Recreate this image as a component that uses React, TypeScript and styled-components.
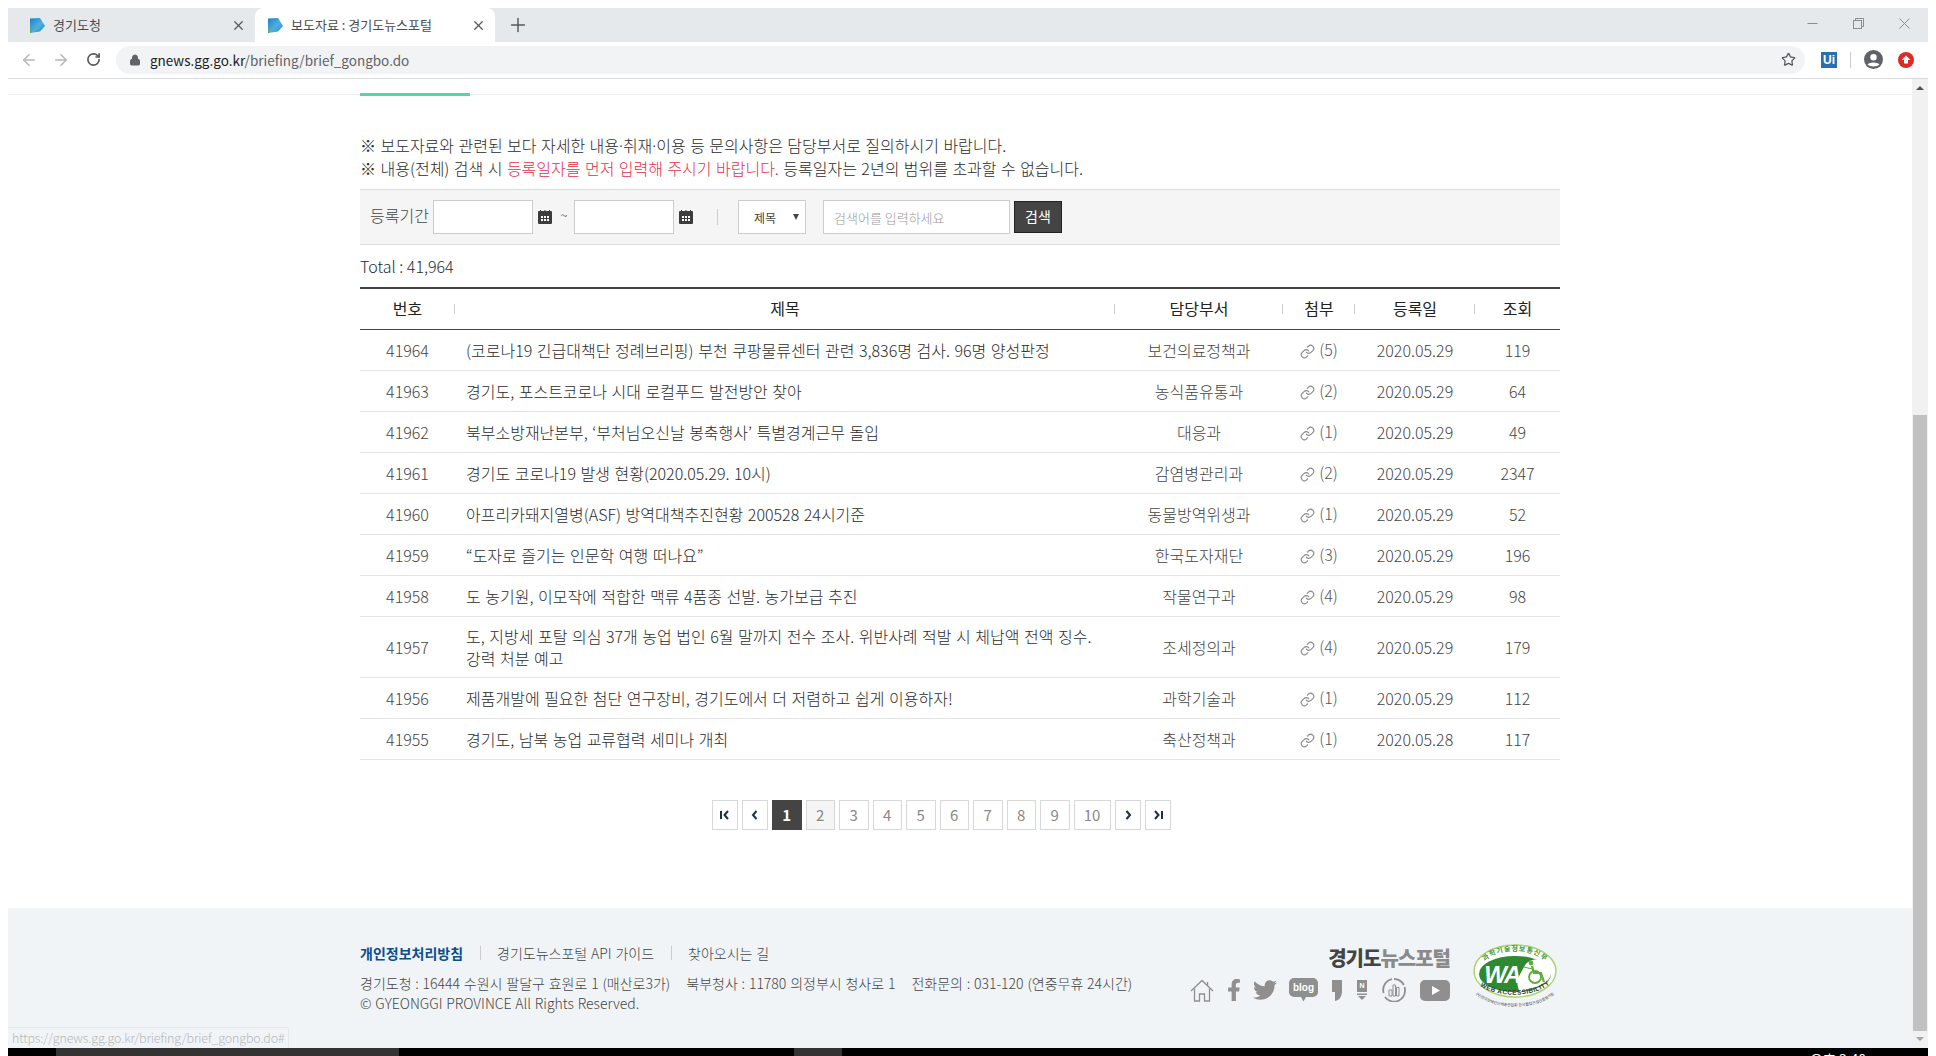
import React from "react";
import styled, { createGlobalStyle } from "styled-components";
import { Link as LinkIcon, Plus, X, ArrowLeft, ArrowRight, RotateCw, Lock, Star } from "lucide-react";
import { FaFacebookF, FaTwitter } from "react-icons/fa";

const FONT = `"Noto Sans CJK KR", "Noto Sans", sans-serif`;

const GlobalStyle = createGlobalStyle`
  html, body {
    margin: 0;
    padding: 0;
    height: 1056px;
    overflow: hidden;
    background: #fff;
    font-family: ${FONT};
  }
  * { box-sizing: border-box; }
`;

const Window = styled.div`
  width: 1920px;
  height: 1048px;
  margin: 8px 0 0 8px;
  display: flex;
  flex-direction: column;
`;

const TabStrip = styled.div`
  height: 34px;
  flex: none;
  background: #e6e9ec;
  display: flex;
  align-items: stretch;
  padding-right: 18px;
`;

const Tab = styled.div<{ $active?: boolean }>`
  width: ${(p) => (p.$active ? "240px" : "247px")};
  display: flex;
  align-items: center;
  padding: 0 9px 0 ${(p) => (p.$active ? "12px" : "21px")};
  gap: 8px;
  background: ${(p) => (p.$active ? "#fff" : "transparent")};
  border-radius: 8px 8px 0 0;
  font-size: 13px;
  color: #4a4d50;
`;

const TabTitle = styled.span`
  flex: 1;
  white-space: nowrap;
  padding-bottom: 2px;
`;

const NewTab = styled.div`
  margin-left: 12px;
  display: flex;
  align-items: center;
  color: #55585c;
`;

const WindowControls = styled.div`
  margin-left: auto;
  display: flex;
  align-items: center;
  gap: 35px;
  padding-bottom: 4px;
`;

const Toolbar = styled.div`
  height: 37px;
  flex: none;
  background: #fff;
  border-bottom: 1px solid #d9dadb;
  display: flex;
  align-items: center;
  padding: 0 14px 1px 12px;
`;

const NavIcons = styled.div`
  display: flex;
  align-items: center;
  gap: 14px;
  width: 96px;
`;

const ReloadIcon = styled(RotateCw)`
  margin-left: 2px;
`;

const AddressBar = styled.div`
  width: 1690px;
  height: 28px;
  background: #f1f3f4;
  border-radius: 14px;
  display: flex;
  align-items: center;
  padding: 0 9px 0 13px;
  gap: 9px;
  font-size: 13.5px;
  color: #202124;
`;

const UrlPath = styled.span`
  color: #5f6368;
`;

const UrlText = styled.span`
  flex: 1;
`;

const ExtensionIcons = styled.div`
  display: flex;
  align-items: center;
  margin-left: 16px;
`;

const UiBadge = styled.div`
  width: 16px;
  height: 16px;
  background: #2a70ad;
  color: #fff;
  font: bold 12px/16px "Liberation Sans", sans-serif;
  text-align: center;
`;

const ToolbarDivider = styled.div`
  width: 1px;
  height: 16px;
  background: #ccc;
  margin: 0 13px 0 13px;
`;

const Viewport = styled.div`
  flex: 1;
  display: flex;
  min-height: 0;
  position: relative;
`;

const Page = styled.div`
  flex: 1;
  display: flex;
  flex-direction: column;
  background: #fff;
  min-width: 0;
`;

const TabLine = styled.div`
  height: 16px;
  flex: none;
  border-bottom: 1px solid #eee;
`;

const TabIndicator = styled.div`
  width: 110px;
  height: 3px;
  margin: 14px 0 0 352px;
  background: #55d3ab;
`;

const Content = styled.main`
  width: 1200px;
  margin-left: 352px;
  color: #2b2b2b;
  font-weight: 300;
`;

const Notice = styled.div`
  margin-top: 40px;
  font-size: 16px;
  line-height: 21.5px;
  word-spacing: 0.9px;
`;

const Dot = styled.span`
  font-family: "Noto Sans", sans-serif;
`;

const Red = styled.span`
  color: #e2324b;
`;

const SearchBar = styled.form`
  margin-top: 10px;
  height: 56px;
  background: #f5f5f5;
  border-top: 1px solid #ddd;
  border-bottom: 1px solid #ddd;
  display: flex;
  align-items: center;
  padding: 0 0 0 10px;
`;

const SearchLabel = styled.label`
  font-size: 16px;
  color: #444;
  width: 63px;
  padding-bottom: 4px;
`;

const DateInput = styled.input`
  width: 100px;
  height: 34px;
  border: 1px solid #ccc;
  background: #fff;
  padding: 0 8px;
  outline: none;
`;

const CalendarWrap = styled.span`
  display: flex;
  margin-left: 5px;
`;

const Tilde = styled.span`
  width: 22px;
  text-align: center;
  font-size: 13px;
  color: #444;
  padding: 0 0 6px 2px;
`;

const Divider = styled.span`
  width: 1px;
  height: 16px;
  background: #ccc;
  margin: 0 20px 0 24px;
`;

const SelectBox = styled.div`
  position: relative;
  width: 68px;
  height: 34px;
`;

const Select = styled.select`
  width: 100%;
  height: 100%;
  appearance: none;
  border: 1px solid #ccc;
  background: #fff;
  font-family: ${FONT};
  font-size: 12px;
  color: #444;
  padding: 0 0 0 15px;
  outline: none;
  border-radius: 0;
`;

const SelectArrow = styled.span`
  position: absolute;
  right: 7px;
  top: 14px;
  width: 0;
  height: 0;
  border-left: 3px solid transparent;
  border-right: 3px solid transparent;
  border-top: 6px solid #444;
`;

const KeywordInput = styled.input`
  width: 187px;
  height: 34px;
  margin-left: 17px;
  border: 1px solid #ccc;
  background: #fff;
  font-family: ${FONT};
  font-size: 13px;
  font-weight: 300;
  padding: 0 10px;
  outline: none;
  &::placeholder { color: #999; }
`;

const SearchButton = styled.button`
  width: 48px;
  height: 32px;
  margin-left: 4px;
  background: #444;
  border: 1px solid #222;
  color: #fff;
  font-family: ${FONT};
  font-size: 14px;
  padding: 0 0 3px;
`;

const Total = styled.p`
  margin: 9px 0 9px;
  font-size: 16px;
  line-height: 24px;
`;

const Board = styled.table`
  width: 1200px;
  table-layout: fixed;
  border-collapse: collapse;
  border-top: 2px solid #444;
`;

const HeadCell = styled.th<{ $w: number; $divider?: boolean }>`
  width: ${(p) => p.$w}px;
  height: 41px;
  padding: 0 0 2px;
  font-size: 16px;
  font-weight: 400;
  color: #222;
  border-bottom: 1px solid #444;
  position: relative;
  &::after {
    content: "";
    display: ${(p) => (p.$divider ? "block" : "none")};
    position: absolute;
    right: 0;
    top: 15px;
    width: 1px;
    height: 10px;
    background: #ccc;
  }
`;

const Row = styled.tr`
  border-bottom: 1px solid #e4e4e4;
`;

const Cell = styled.td`
  height: 41px;
  padding: 0;
  text-align: center;
  font-size: 16px;
  color: #444;
`;

const TitleCell = styled.td`
  padding: 8px 18px 8px 11px;
  font-size: 16px;
  line-height: 22px;
  word-spacing: 1px;
  word-break: keep-all;
  color: #2b2b2b;
`;

const AttachInner = styled.span`
  display: inline-flex;
  align-items: center;
  gap: 4px;
  color: #555;
`;

const AttachIcon = styled(LinkIcon)`
  color: #888;
  transform: translateY(2px);
`;

const Pager = styled.nav`
  display: flex;
  gap: 4px;
  margin: 40px 0 0 352px;
`;

const PageButton = styled.a<{ $active?: boolean; $hover?: boolean; $w?: number }>`
  width: ${(p) => p.$w ?? 29.5}px;
  height: 30px;
  display: flex;
  align-items: center;
  justify-content: center;
  border: 1px solid ${(p) => (p.$active ? "#444" : "#d8d8d8")};
  background: ${(p) => (p.$active ? "#444" : p.$hover ? "#f5f5f5" : "#fff")};
  color: ${(p) => (p.$active ? "#fff" : "#888")};
  font-size: 15px;
  font-weight: ${(p) => (p.$active ? 700 : 400)};
`;

const Footer = styled.footer`
  margin-top: auto;
  height: 140px;
  flex: none;
  background: #f0f4f7;
  display: flex;
  padding-left: 352px;
`;

const FooterInner = styled.div`
  width: 1200px;
  display: flex;
  justify-content: space-between;
`;

const FooterLeft = styled.div`
  padding-top: 34px;
  font-size: 14px;
  font-weight: 300;
  color: #444;
  word-spacing: 0.7px;
`;

const FooterLinks = styled.ul`
  display: flex;
  list-style: none;
  margin: 0 0 9px;
  padding: 0;
  line-height: 22px;
`;

const FooterLink = styled.li<{ $strong?: boolean }>`
  color: ${(p) => (p.$strong ? "#0c4f8f" : "#444")};
  font-weight: ${(p) => (p.$strong ? 700 : 300)};
  & + & {
    margin-left: 17px;
    padding-left: 17px;
    background: linear-gradient(#ccc, #ccc) left center / 1px 14px no-repeat;
  }
`;

const Address = styled.address`
  font-style: normal;
  line-height: 20px;
`;

const AddressPart = styled.span`
  margin-right: 16px;
`;

const FooterRight = styled.div`
  display: flex;
  align-items: flex-start;
  gap: 20px;
  padding-top: 37px;
`;

const BrandBlock = styled.div`
  display: flex;
  flex-direction: column;
  align-items: flex-end;
`;

const Brand = styled.div`
  font-size: 20px;
  line-height: 26px;
  font-weight: 900;
  letter-spacing: -1px;
  color: #444;
`;

const BrandLight = styled.span`
  color: #8a8a8a;
`;

const SnsRow = styled.div`
  display: flex;
  align-items: center;
  margin-top: 7px;
  height: 24px;
  color: #8f8f8f;
`;

const Sns = styled.span<{ $gap: number }>`
  display: flex;
  margin-left: ${(p) => p.$gap}px;
`;

const BadgeWrap = styled.div`
  margin-top: -2px;
  display: flex;
`;

const Scrollbar = styled.div`
  width: 16px;
  flex: none;
  background: #f1f1f1;
  display: flex;
  flex-direction: column;
  align-items: center;
  padding-top: 7px;
`;

const ScrollUp = styled.span`
  width: 0;
  height: 0;
  border-left: 4px solid transparent;
  border-right: 4px solid transparent;
  border-bottom: 4px solid #505050;
`;

const ScrollThumb = styled.div`
  width: 14px;
  height: 616px;
  margin-top: 325px;
  background: #c1c1c1;
`;

const ScrollDown = styled.span`
  width: 0;
  height: 0;
  margin-top: 6px;
  border-left: 4px solid transparent;
  border-right: 4px solid transparent;
  border-top: 4px solid #a3a3a3;
`;

const StatusBubble = styled.div`
  position: absolute;
  left: 0;
  bottom: 0;
  height: 21px;
  padding: 0 4px;
  background: #f0f4f7;
  border: 1px solid #e6e8ea;
  border-left: none;
  border-bottom: none;
  border-radius: 0 3px 0 0;
  font-size: 12.5px;
  font-weight: 300;
  letter-spacing: -0.15px;
  line-height: 19px;
  color: #b8b8b8;
`;

const Taskbar = styled.div`
  height: 8px;
  flex: none;
  background: #000;
  overflow: hidden;
  display: flex;
  position: relative;
`;

const TaskItem = styled.div<{ $w: number; $gap: number }>`
  width: ${(p) => p.$w}px;
  margin-left: ${(p) => p.$gap}px;
  background: #333;
`;

const Clock = styled.div`
  margin-left: 968px;
  padding-top: 2px;
  color: #fff;
  font-size: 14px;
  line-height: 18px;
  white-space: nowrap;
`;

function Favicon() {
  return (
    <svg width="16" height="15" viewBox="0 0 16 15">
      <defs>
        <linearGradient id="favBlue" x1="0" y1="0" x2="1" y2="1">
          <stop offset="0" stopColor="#1f7fc4" />
          <stop offset="0.55" stopColor="#4fb0e0" />
          <stop offset="1" stopColor="#1c86c8" />
        </linearGradient>
      </defs>
      <path d="M1 0.5 L11 0 L16 8 L11 13.5 L1 15Z" fill="url(#favBlue)" />
      <path d="M1 9 L2.5 14.8 L1 15Z" fill="#6aa84f" />
    </svg>
  );
}

function MinimizeIcon() {
  return (
    <svg width="11" height="11" viewBox="0 0 11 11" stroke="#8a8d90">
      <path d="M0.5 5.5H10.5" />
    </svg>
  );
}

function RestoreIcon() {
  return (
    <svg width="11" height="11" viewBox="0 0 11 11" fill="none" stroke="#8a8d90">
      <rect x="0.5" y="2.5" width="8" height="8" />
      <path d="M2.5 2.5V0.5H10.5V8.5H8.5" />
    </svg>
  );
}

function CloseIcon() {
  return (
    <svg width="11" height="11" viewBox="0 0 11 11" stroke="#8a8d90">
      <path d="M0.5 0.5L10.5 10.5M10.5 0.5L0.5 10.5" />
    </svg>
  );
}

function ProfileIcon() {
  return (
    <svg width="19" height="19" viewBox="0 0 19 19">
      <circle cx="9.5" cy="9.5" r="9.5" fill="#5f6368" />
      <circle cx="9.5" cy="7.2" r="3.2" fill="#fff" />
      <path d="M3.5 14.5C5 11.8 14 11.8 15.5 14.5C13 17 6 17 3.5 14.5Z" fill="#fff" />
    </svg>
  );
}

function UploadIcon() {
  return (
    <svg width="16" height="16" viewBox="0 0 16 16" style={{ marginLeft: 15 }}>
      <circle cx="8" cy="8" r="8" fill="#dc2a26" />
      <path d="M8 3.5L12.5 8H10V11.5H6V8H3.5Z" fill="#fff" />
    </svg>
  );
}

function CalendarIcon() {
  return (
    <svg width="14" height="14" viewBox="0 0 14 14">
      <rect x="0" y="1" width="14" height="13" rx="1" fill="#3c3c3c" />
      <rect x="2" y="0" width="1" height="2" fill="#3c3c3c" />
      <rect x="6.5" y="0" width="1" height="2" fill="#3c3c3c" />
      <rect x="11" y="0" width="1" height="2" fill="#3c3c3c" />
      {[3, 6, 9].map((x) =>
        [6, 9].map((y) => <rect key={`${x}${y}`} x={x} y={y} width="2" height="2" fill="#fff" />)
      )}
    </svg>
  );
}

function PagerArrow({ dir, end }: { dir: "left" | "right"; end?: boolean }) {
  const flip = dir === "right" ? "translate(12 0) scale(-1 1)" : undefined;
  return (
    <svg width="12" height="10" viewBox="0 0 12 10">
      <g transform={flip} fill="none" stroke="#1f2f4a" strokeWidth="2">
        {end && <path d="M2 1V9" strokeWidth="2" />}
        <path d={end ? "M9 1L5.5 5L9 9" : "M7.5 1L4 5L7.5 9"} />
      </g>
    </svg>
  );
}

function HomeIcon() {
  return (
    <svg width="24" height="23" viewBox="0 0 24 23" fill="none" stroke="#8f8f8f" strokeWidth="1.3">
      <path d="M1 12L12 1.5L23 12" />
      <path d="M4.5 9.5V22H9.5V15H14.5V22H19.5V9.5" />
      <path d="M17.5 3V6.5" />
    </svg>
  );
}

function BlogIcon() {
  return (
    <svg width="29" height="24" viewBox="0 0 29 24">
      <path d="M5 0H24A5 5 0 0 1 29 5V14A5 5 0 0 1 24 19H17L14.5 23.5L12 19H5A5 5 0 0 1 0 14V5A5 5 0 0 1 5 0Z" fill="#8f8f8f" />
      <text x="14.5" y="13" textAnchor="middle" fontFamily="Liberation Sans, sans-serif" fontWeight="700" fontSize="10" fill="#fff">
        blog
      </text>
    </svg>
  );
}

function PostIcon() {
  return (
    <svg width="10" height="21" viewBox="0 0 10 21">
      <path d="M0 0H10V11C10 16 8 20 3 21V12H0Z" fill="#8f8f8f" />
    </svg>
  );
}

function NaverPostIcon() {
  return (
    <svg width="10" height="21" viewBox="0 0 10 21">
      <path d="M0 0H10V12H0Z" fill="#8f8f8f" />
      <path d="M0 13.5H10V15H0Z" fill="#8f8f8f" />
      <path d="M1 16H9L5 20Z" fill="#8f8f8f" />
      <text x="5" y="8" textAnchor="middle" fontFamily="Liberation Sans, sans-serif" fontWeight="700" fontSize="7" fill="#fff">
        N
      </text>
    </svg>
  );
}

function StatsIcon() {
  return (
    <svg width="24" height="24" viewBox="0 0 24 24" fill="none" stroke="#8f8f8f">
      <path d="M12 1A11 11 0 0 1 23 12" strokeWidth="1.8" strokeDasharray="12 2" />
      <path d="M23 12A11 11 0 0 1 3 19" strokeWidth="1.8" />
      <path d="M1.6 15A11 11 0 0 1 10 1.2" strokeWidth="1.8" />
      <path d="M7 12H10V18H7ZM11 7H13.5V18H11ZM14.5 9.5H17V18H14.5Z" strokeWidth="1" />
    </svg>
  );
}

function YoutubeIcon() {
  return (
    <svg width="30" height="21" viewBox="0 0 30 21">
      <rect width="30" height="21" rx="5" fill="#8f8f8f" />
      <path d="M12 6L20 10.5L12 15Z" fill="#fff" />
    </svg>
  );
}

function WaBadge() {
  return (
    <svg width="90" height="68" viewBox="0 0 90 68">
      <defs>
        <path id="waTop" d="M11 24A35 21 0 0 1 79 24" />
        <path id="waBottom" d="M7 40C22 56 68 56 83 38" />
        <path id="waSmall" d="M0 44C14 70 76 70 90 44" />
      </defs>
      <ellipse cx="45" cy="28" rx="41" ry="26" fill="#fff" stroke="#a6d46a" strokeWidth="1.4" />
      <ellipse cx="45" cy="31" rx="36" ry="18" fill="#2e8a2f" />
      <path d="M50 49C44 38 50 32 54 24C58 15 71 14 79 22C84 30 80 38 71 42C62 46 56 46 50 49Z" fill="#fff" />
      <text fontFamily="Noto Sans CJK KR, sans-serif" fontSize="7" fontWeight="700" fill="#3a9a3a" letterSpacing="0.8">
        <textPath href="#waTop" startOffset="50%" textAnchor="middle">과학기술정보통신부</textPath>
      </text>
      <text x="32" y="40" textAnchor="middle" fontFamily="Liberation Sans, sans-serif" fontStyle="italic" fontWeight="700" fontSize="24" letterSpacing="-1.5" fill="#fff">
        WA
      </text>
      <g fill="none" stroke="#5cad3a" strokeWidth="1.8">
        <circle cx="65" cy="34" r="6" />
        <path d="M62 23L64 30H71L74 39" strokeWidth="2.2" />
        <path d="M54 24L62 26" strokeWidth="1.2" />
      </g>
      <circle cx="61" cy="20" r="2.4" fill="#5cad3a" />
      <text fontFamily="Liberation Sans, sans-serif" fontSize="6.4" fontWeight="700" fill="#333" letterSpacing="0.5">
        <textPath href="#waBottom" startOffset="50%" textAnchor="middle">WEB ACCESSIBILITY</textPath>
      </text>
      <text fontFamily="Noto Sans CJK KR, sans-serif" fontSize="3.8" fill="#444">
        <textPath href="#waSmall" startOffset="50%" textAnchor="middle">(사)한국장애인단체총연합회 한국웹접근성인증평가원</textPath>
      </text>
    </svg>
  );
}

const rows = [
  { no: 41964, title: "(코로나19 긴급대책단 정례브리핑) 부천 쿠팡물류센터 관련 3,836명 검사. 96명 양성판정", dept: "보건의료정책과", files: 5, date: "2020.05.29", views: 119 },
  { no: 41963, title: "경기도, 포스트코로나 시대 로컬푸드 발전방안 찾아", dept: "농식품유통과", files: 2, date: "2020.05.29", views: 64 },
  { no: 41962, title: "북부소방재난본부, ‘부처님오신날 봉축행사’ 특별경계근무 돌입", dept: "대응과", files: 1, date: "2020.05.29", views: 49 },
  { no: 41961, title: "경기도 코로나19 발생 현황(2020.05.29. 10시)", dept: "감염병관리과", files: 2, date: "2020.05.29", views: 2347 },
  { no: 41960, title: "아프리카돼지열병(ASF) 방역대책추진현황 200528 24시기준", dept: "동물방역위생과", files: 1, date: "2020.05.29", views: 52 },
  { no: 41959, title: "“도자로 즐기는 인문학 여행 떠나요”", dept: "한국도자재단", files: 3, date: "2020.05.29", views: 196 },
  { no: 41958, title: "도 농기원, 이모작에 적합한 맥류 4품종 선발. 농가보급 추진", dept: "작물연구과", files: 4, date: "2020.05.29", views: 98 },
  { no: 41957, title: "도, 지방세 포탈 의심 37개 농업 법인 6월 말까지 전수 조사. 위반사례 적발 시 체납액 전액 징수. 강력 처분 예고", dept: "조세정의과", files: 4, date: "2020.05.29", views: 179 },
  { no: 41956, title: "제품개발에 필요한 첨단 연구장비, 경기도에서 더 저렴하고 쉽게 이용하자!", dept: "과학기술과", files: 1, date: "2020.05.29", views: 112 },
  { no: 41955, title: "경기도, 남북 농업 교류협력 세미나 개최", dept: "축산정책과", files: 1, date: "2020.05.28", views: 117 },
];

const columns = [
  { label: "번호", w: 95 },
  { label: "제목", w: 660 },
  { label: "담당부서", w: 168 },
  { label: "첨부", w: 72 },
  { label: "등록일", w: 120 },
  { label: "조회", w: 85 },
];

export default function App() {
  return (
    <>
      <GlobalStyle />
      <Window>
        <TabStrip>
          <Tab>
            <Favicon />
            <TabTitle>경기도청</TabTitle>
            <X size={15} color="#55585c" strokeWidth={2} />
          </Tab>
          <Tab $active>
            <Favicon />
            <TabTitle>보도자료 : 경기도뉴스포털</TabTitle>
            <X size={15} color="#55585c" strokeWidth={2} />
          </Tab>
          <NewTab>
            <Plus size={22} strokeWidth={1.6} />
          </NewTab>
          <WindowControls>
            <MinimizeIcon />
            <RestoreIcon />
            <CloseIcon />
          </WindowControls>
        </TabStrip>
        <Toolbar>
          <NavIcons>
            <ArrowLeft size={18} color="#b4b6b8" />
            <ArrowRight size={18} color="#b4b6b8" />
            <ReloadIcon size={15} color="#55585c" strokeWidth={2.6} />
          </NavIcons>
          <AddressBar>
            <Lock size={12} color="#5f6368" fill="#5f6368" />
            <UrlText>
              gnews.gg.go.kr<UrlPath>/briefing/brief_gongbo.do</UrlPath>
            </UrlText>
            <Star size={15} color="#55585c" strokeWidth={2} />
          </AddressBar>
          <ExtensionIcons>
            <UiBadge>Ui</UiBadge>
            <ToolbarDivider />
            <ProfileIcon />
            <UploadIcon />
          </ExtensionIcons>
        </Toolbar>
        <Viewport>
          <Page>
            <TabLine>
              <TabIndicator />
            </TabLine>
            <Content>
              <Notice>
                ※ 보도자료와 관련된 보다 자세한 내용<Dot>·</Dot>취재<Dot>·</Dot>이용 등 문의사항은 담당부서로 질의하시기 바랍니다.
                <br />※ 내용(전체) 검색 시 <Red>등록일자를 먼저 입력해 주시기 바랍니다.</Red> 등록일자는 2년의 범위를 초과할 수 없습니다.
              </Notice>
              <SearchBar>
                <SearchLabel>등록기간</SearchLabel>
                <DateInput />
                <CalendarWrap>
                  <CalendarIcon />
                </CalendarWrap>
                <Tilde>~</Tilde>
                <DateInput />
                <CalendarWrap>
                  <CalendarIcon />
                </CalendarWrap>
                <Divider />
                <SelectBox>
                  <Select defaultValue="title">
                    <option value="title">제목</option>
                  </Select>
                  <SelectArrow />
                </SelectBox>
                <KeywordInput placeholder="검색어를 입력하세요" />
                <SearchButton type="button">검색</SearchButton>
              </SearchBar>
              <Total>Total : 41,964</Total>
              <Board>
                <thead>
                  <tr>
                    {columns.map((c, i) => (
                      <HeadCell key={c.label} $w={c.w} $divider={i < columns.length - 1}>
                        {c.label}
                      </HeadCell>
                    ))}
                  </tr>
                </thead>
                <tbody>
                  {rows.map((r) => (
                    <Row key={r.no}>
                      <Cell>{r.no}</Cell>
                      <TitleCell>{r.title}</TitleCell>
                      <Cell>{r.dept}</Cell>
                      <Cell>
                        <AttachInner>
                          <AttachIcon size={15} strokeWidth={1.8} />({r.files})
                        </AttachInner>
                      </Cell>
                      <Cell>{r.date}</Cell>
                      <Cell>{r.views}</Cell>
                    </Row>
                  ))}
                </tbody>
              </Board>
              <Pager>
                <PageButton $w={26}><PagerArrow dir="left" end /></PageButton>
                <PageButton $w={26}><PagerArrow dir="left" /></PageButton>
                {[1, 2, 3, 4, 5, 6, 7, 8, 9, 10].map((n) => (
                  <PageButton key={n} $active={n === 1} $hover={n === 2} $w={n === 10 ? 37 : undefined}>
                    {n}
                  </PageButton>
                ))}
                <PageButton $w={26}><PagerArrow dir="right" /></PageButton>
                <PageButton $w={26}><PagerArrow dir="right" end /></PageButton>
              </Pager>
            </Content>
            <Footer>
              <FooterInner>
                <FooterLeft>
                  <FooterLinks>
                    <FooterLink $strong>개인정보처리방침</FooterLink>
                    <FooterLink>경기도뉴스포털 API 가이드</FooterLink>
                    <FooterLink>찾아오시는 길</FooterLink>
                  </FooterLinks>
                  <Address>
                    <AddressPart>경기도청 : 16444 수원시 팔달구 효원로 1 (매산로3가)</AddressPart>
                    <AddressPart>북부청사 : 11780 의정부시 청사로 1</AddressPart>
                    <AddressPart>전화문의 : 031-120 (연중무휴 24시간)</AddressPart>
                    <br />© GYEONGGI PROVINCE All Rights Reserved.
                  </Address>
                </FooterLeft>
                <FooterRight>
                  <BrandBlock>
                    <Brand>
                      경기도<BrandLight>뉴스포털</BrandLight>
                    </Brand>
                    <SnsRow>
                      <HomeIcon />
                      <Sns $gap={9}><FaFacebookF size={22} /></Sns>
                      <Sns $gap={8}><FaTwitter size={24} /></Sns>
                      <Sns $gap={12}><BlogIcon /></Sns>
                      <Sns $gap={14}><PostIcon /></Sns>
                      <Sns $gap={15}><NaverPostIcon /></Sns>
                      <Sns $gap={15}><StatsIcon /></Sns>
                      <Sns $gap={14}><YoutubeIcon /></Sns>
                    </SnsRow>
                  </BrandBlock>
                  <BadgeWrap>
                    <WaBadge />
                  </BadgeWrap>
                </FooterRight>
              </FooterInner>
            </Footer>
          </Page>
          <Scrollbar>
            <ScrollUp />
            <ScrollThumb />
            <ScrollDown />
          </Scrollbar>
          <StatusBubble>https://gnews.gg.go.kr/briefing/brief_gongbo.do#</StatusBubble>
        </Viewport>
        <Taskbar>
          <TaskItem $w={343} $gap={48} />
          <TaskItem $w={48} $gap={395} />
          <Clock>오후 3:40</Clock>
        </Taskbar>
      </Window>
    </>
  );
}
